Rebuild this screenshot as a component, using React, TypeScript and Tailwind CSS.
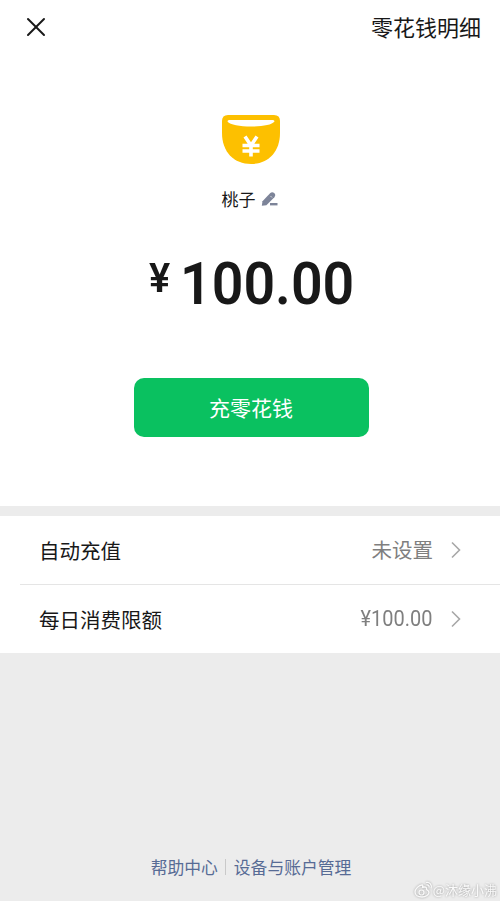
import { X } from "lucide-react";

const ROWS = [
  { label: "自动充值", value: "未设置", numeric: false },
  { label: "每日消费限额", value: "¥100.00", numeric: true },
];

function PouchIcon() {
  return (
    <svg width="60" height="50" viewBox="0 0 60 50" aria-hidden="true">
      <path
        d="M7 1H53Q59 1 59 7V19C59 38 47 50 30 50S1 38 1 19V7Q1 1 7 1Z"
        fill="#fdc000"
      />
      <path d="M6.5 7.5Q6.500 6 8 6H52Q53.500 6 53.500 7.500C51 11 41 12.500 30 12.500S9 11 6.500 7.500Z" fill="#fff" />
      <path
        d="M24 22.500L30 31.500L36 22.500M30 31V42.500M21.500 31.500H38.500M21.500 37H38.500"
        fill="none"
        stroke="#fff"
        strokeWidth="3.600"
      />
    </svg>
  );
}

function EditIcon() {
  return (
    <svg width="18" height="16" viewBox="0 0 18 16" aria-hidden="true">
      <path
        d="M.8 14.800L1.500 10.300L9.300 2Q11.200 .3 13.200 2T13.400 6.200L5.400 14.200Z"
        fill="#7d8499"
      />
      <path d="M9.500 5L11 6.500" stroke="#fff" strokeWidth=".7" />
      <path d="M9 13.200H16.500" stroke="#7d8499" strokeWidth="2.400" />
    </svg>
  );
}

function Chevron() {
  return (
    <svg width="10" height="18" viewBox="0 0 10 18" fill="none" aria-hidden="true">
      <path d="M1 1.500L8.500 9L1 16.500" stroke="#a8a8a8" strokeWidth="1.600" />
    </svg>
  );
}

function WeiboIcon() {
  return (
    <svg width="19" height="17" viewBox="0 0 19 17" fill="none" stroke="currentColor" aria-hidden="true">
      <path
        d="M8 4C5 4 1 8 1 11S4 16 8 16S15 13.500 15 11.500S13 9 12.500 8.500C13 6 11 5.500 8.500 6.500C9 5 9 4 8 4Z"
        strokeWidth="1.300"
      />
      <circle cx="7.500" cy="11.500" r="2.500" strokeWidth="1.200" />
      <path d="M12 1.500C15.500 .5 18.500 4 17 7.500M12.500 4C14.500 3.500 15.500 5 15 6.500" strokeWidth="1.300" />
    </svg>
  );
}

export default function App() {
  return (
    <div className="flex h-[901px] w-[500px] flex-col bg-[#ececec] font-['Noto_Sans_CJK_SC',sans-serif] text-[#181818]">
      <main className="flex h-[506px] flex-col items-center bg-white">
        <header className="flex h-[54px] w-full items-center justify-between pr-[19px] pl-5">
          <X size={32} strokeWidth={1.5} />
          <span className="pb-0.5 text-[22px] leading-none">零花钱明细</span>
        </header>
        <div className="mt-[60px] ml-0.5">
          <PouchIcon />
        </div>
        <div className="mt-[23px] flex h-6 items-center gap-[5px]">
          <span className="pb-0.5 text-[17px] leading-none">桃子</span>
          <EditIcon />
        </div>
        <div className="mt-[42.500px] flex h-[60px] w-[202px] items-start font-[Roboto,sans-serif] font-semibold">
          <span className="mt-[4px] w-[30.500px] shrink-0 origin-left scale-x-[0.97] text-[41px] leading-none">¥</span>
          <span className="origin-left scale-x-[0.925] text-[60px] leading-[60px]">100.00</span>
        </div>
        <button className="mt-[64px] ml-0.5 h-[59px] w-[235px] rounded-[10px] bg-[#0ac160] pt-px text-[21px] text-white">
          充零花钱
        </button>
      </main>
      <section className="mt-[10px] bg-white">
        {ROWS.map((row, i) => (
          <div key={row.label} className={i > 0 ? "ml-5 border-t border-[#e5e5e5] pl-[19px]" : "pl-[39px]"}>
            <div className="flex h-[68px] items-center pr-[39px]">
              <span className="flex-1 text-[20.500px] leading-none">{row.label}</span>
              <span
                className={
                  row.numeric
                    ? "mr-[19px] origin-right scale-x-[0.93] font-[Roboto,sans-serif] text-[21.500px] leading-none text-[#7f7f7f]"
                    : "mr-[18px] pb-0.5 text-[20.500px] leading-none text-[#7f7f7f]"
                }
              >
                {row.value}
              </span>
              <Chevron />
            </div>
          </div>
        ))}
      </section>
      <footer className="mt-auto">
        <nav className="flex h-6 items-center justify-center gap-[7.500px] pl-0.5 text-[16.800px] leading-none text-[#576b95]">
          <span>帮助中心</span>
          <span className="h-4 w-px bg-[#c9c9c9]" />
          <span>设备与账户管理</span>
        </nav>
        <div className="flex h-[22px] items-center justify-end pr-[3px] pb-px text-[13px] text-[#fafafa] drop-shadow-[0_0_1px_#999999]">
          <WeiboIcon />
          <span>@沐缘小沸</span>
        </div>
      </footer>
    </div>
  );
}
